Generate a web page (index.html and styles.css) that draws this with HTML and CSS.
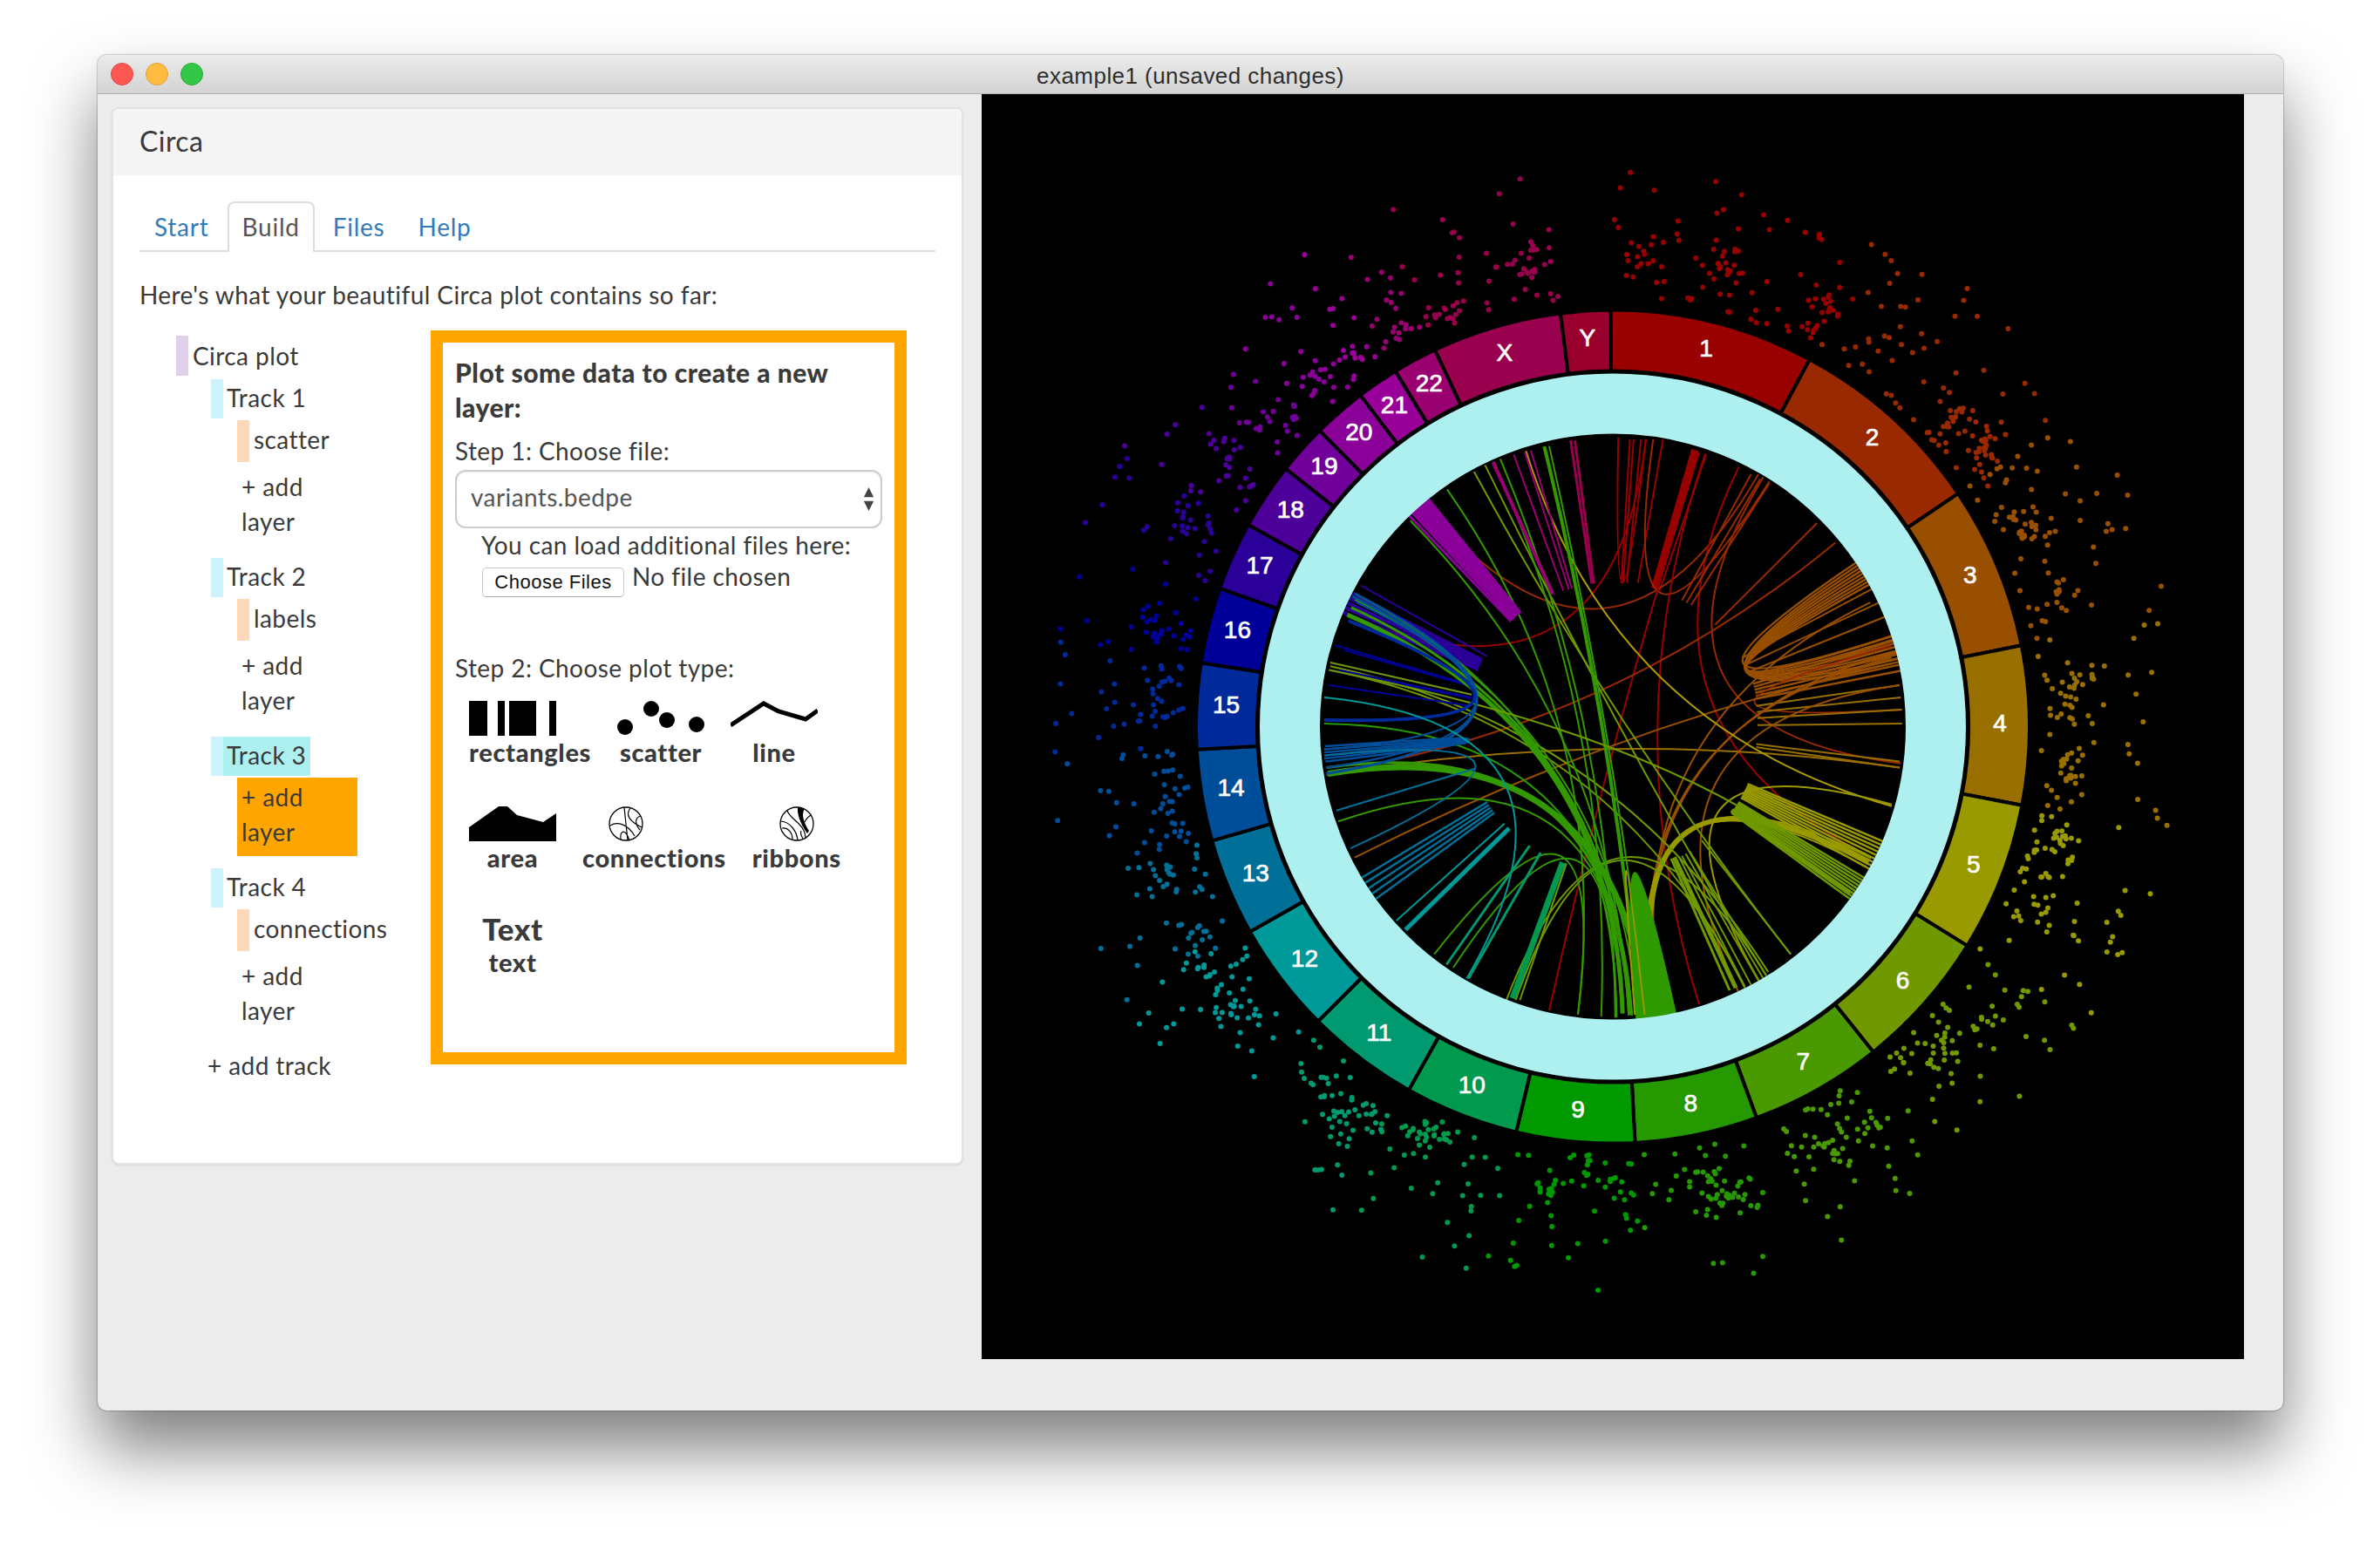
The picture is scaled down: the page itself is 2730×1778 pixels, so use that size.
FILE: index.html
```html
<!DOCTYPE html>
<html lang="en">
<head>
<meta charset="utf-8">
<title>example1 (unsaved changes)</title>
<link rel="stylesheet" href="styles.css">
</head>
<body>
<div class="window">
  <header class="titlebar">
    <div class="lights"><span class="light red"></span><span class="light yellow"></span><span class="light green"></span></div>
    <div class="window-title">example1 (unsaved changes)</div>
  </header>
  <main class="main">
    <section class="sidebar">
      <div class="panel">
        <div class="panel-heading">Circa</div>
        <div class="panel-body">
          <ul class="tabs">
            <li class="tab"><a>Start</a></li>
            <li class="tab active"><a>Build</a></li>
            <li class="tab"><a>Files</a></li>
            <li class="tab"><a>Help</a></li>
          </ul>
          <p class="intro">Here's what your beautiful Circa plot contains so far:</p>
          <div class="build">
            <div class="tree">
              <div class="plot-node">Circa plot</div>
              <div class="track"><div class="track-name">Track 1</div>
                <div class="layer">scatter</div>
                <div class="add-layer">+ add layer</div>
              </div>
              <div class="track"><div class="track-name">Track 2</div>
                <div class="layer">labels</div>
                <div class="add-layer">+ add layer</div>
              </div>
              <div class="track"><div class="track-name selected"><span>Track 3</span></div>
                <div class="add-layer current">+ add layer</div>
              </div>
              <div class="track"><div class="track-name">Track 4</div>
                <div class="layer">connections</div>
                <div class="add-layer">+ add layer</div>
              </div>
              <div class="add-track">+ add track</div>
            </div>
            <div class="new-layer">
              <div class="new-title">Plot some data to create a new layer:</div>
              <div class="step-one">Step 1: Choose file:</div>
              <div class="select-wrap">
                <select class="file-select"><option>variants.bedpe</option></select>
                <svg class="select-arrows" viewBox="0 0 10 24"><path d="M5 0l5 10H0zM5 24l5-10H0z"/></svg>
              </div>
              <div class="load-more">You can load additional files here:</div>
              <div class="file-row"><button class="file-button">Choose Files</button><span>No file chosen</span></div>
              <div class="step-two">Step 2: Choose plot type:</div>
              <div class="plot-row">
                <div class="plot-type">
                  <svg class="icon" viewBox="0 0 100 40"><rect width="21" height="40"/><rect x="33" width="8" height="40"/><rect x="46" width="31" height="40"/><rect x="92" width="8" height="40"/></svg>
                  <div class="plot-label">rectangles</div>
                </div>
                <div class="plot-type centered">
                  <svg class="icon" viewBox="0 0 100 40"><circle cx="9" cy="30" r="9"/><circle cx="39" cy="9" r="9"/><circle cx="57" cy="22" r="9"/><circle cx="91" cy="27" r="9"/></svg>
                  <div class="plot-label">scatter</div>
                </div>
                <div class="plot-type centered">
                  <svg class="icon" viewBox="0 0 100 40"><path class="icon-line" d="M0 28L38 3 55 12 86 21 100 11"/></svg>
                  <div class="plot-label">line</div>
                </div>
              </div>
              <div class="plot-row">
                <div class="plot-type centered">
                  <svg class="icon" viewBox="0 0 100 40"><path d="M0 24L34 0H44L55 10 85 18 100 8V40H0z"/></svg>
                  <div class="plot-label">area</div>
                </div>
                <div class="plot-type">
                  <svg class="icon round shifted" viewBox="0 0 40 40"><circle class="icon-ring" cx="20" cy="20" r="19"/><path class="icon-thin" d="M18 1L22 39M25 2C19 10 24 17 38 24M37 11C30 13 30 20 36 27M2 22C10 17 22 20 30 34M14 38C13 28 19 24 24 39"/></svg>
                  <div class="plot-label">connections</div>
                </div>
                <div class="plot-type centered">
                  <svg class="icon round" viewBox="0 0 40 40"><circle class="icon-ring" cx="20" cy="20" r="19"/><path d="M21 1L29 3C24 10 30 22 34 28L32 31C27 24 20 12 21 1z"/><path class="icon-thin" d="M9 5C13 16 30 20 30 37M36 10C30 14 28 18 27 23M2 17C12 18 20 28 21 39M3 25C10 24 15 30 15 38M27 37C24 32 24 30 25 28"/></svg>
                  <div class="plot-label">ribbons</div>
                </div>
              </div>
              <div class="plot-row last">
                <div class="plot-type centered text-type">
                  <div class="text-sample">Text</div>
                  <div class="plot-label">text</div>
                </div>
              </div>
            </div>
          </div>
        </div>
      </div>
    </section>
    <section class="chart">
      <svg id="circos" class="circos" viewBox="-724 -725.6 1448 1451"></svg>
    </section>
  </main>
</div>
<script src="chart.js"></script>
</body>
</html>
```

FILE: styles.css
```css
* { box-sizing: border-box; }
html, body { margin: 0; height: 100%; }
body {
  background: #fff;
  padding: 63px 111px 0 112px;
  font-family: "Lato", "Noto Sans", sans-serif;
  font-size: 28px;
  line-height: 40px;
  color: #3a3a3a;
  letter-spacing: .42px;
  overflow: hidden;
}
.window {
  height: 1555px;
  background: #ececec;
  border-radius: 10px;
  box-shadow: 0 44px 76px rgba(0,0,0,.5), 0 0 2px rgba(0,0,0,.6);
  overflow: hidden;
  position: relative;
}
.titlebar {
  height: 44px;
  display: flex;
  align-items: center;
  position: relative;
  background: linear-gradient(#ebebeb, #d3d3d3);
  border-bottom: 1px solid #b1b1b1;
  box-sizing: content-box;
}
.lights { display: flex; gap: 14px; padding-left: 15px; }
.light { width: 26px; height: 26px; border-radius: 50%; }
.red { background: #fc5753; border: 1px solid #df4744; }
.yellow { background: #fdbc40; border: 1px solid #de9f34; }
.green { background: #33c748; border: 1px solid #27aa35; }
.window-title {
  position: absolute;
  left: 0; right: 0; top: 0;
  text-align: center;
  font: 26px/48px "Liberation Sans", Arial, sans-serif;
  letter-spacing: .45px;
  color: #2e2e2e;
}
.main { display: flex; }
.sidebar { width: 1014px; padding: 15px 21px 0 16px; }
.panel {
  background: #fff;
  border: 2px solid #e2e2e2;
  border-radius: 8px;
  overflow: hidden;
  box-shadow: 0 1px 2px rgba(0,0,0,.08);
}
.panel-heading {
  height: 76px;
  padding: 0 30px;
  background: #f5f5f5;
  font-size: 32px;
  line-height: 74px;
}
.panel-body { padding: 30px 30px 92px; }
.tabs {
  list-style: none;
  margin: 0;
  padding: 0;
  display: flex;
  gap: 4px;
  height: 58px;
  border-bottom: 2px solid #ddd;
}
.tab a {
  display: block;
  height: 58px;
  padding: 7px 15px 0;
  border: 2px solid transparent;
  border-bottom: 0;
  color: #337ab7;
  letter-spacing: .75px;
  border-radius: 8px 8px 0 0;
}
.tab.active a { color: #555; background: #fff; border-color: #ddd; }
.intro { margin: 29px 0 21px; }
.build { display: flex; }
.tree { width: 334px; padding: 6px 0 0 42px; flex: none; }
.plot-node { height: 46px; padding: 3px 0 0 5px; border-left: 14px solid #e1d0ec; margin-bottom: 4px; }
.track { margin-left: 40px; }
.track-name { height: 45px; padding: 1px 0 0 4px; border-left: 14px solid #cdf3ff; width: 114px; margin-bottom: 2px; white-space: nowrap; }
.track-name.selected { padding: 0; }
.track-name.selected span { display: block; height: 45px; padding: 1px 0 0 4px; background: #aeefef; }
.layer { margin-left: 30px; height: 48px; padding: 2px 0 0 5px; border-left: 14px solid #fdd9b9; margin-bottom: 6px; white-space: nowrap; }
.add-layer { margin-left: 30px; width: 138px; padding: 2px 5px 8px; margin-bottom: 14px; }
.add-layer.current { background: #ffa500; }
.add-track { margin: 15px 0 0 36px; white-space: nowrap; }
.new-layer {
  width: 546px;
  height: 842px;
  border: 14px solid #ffa500;
  padding: 14px;
}
.new-title { font-weight: 900; font-size: 30px; letter-spacing: .5px; width: 460px; }
.step-one { margin-top: 10px; }
.select-wrap { position: relative; margin-top: 2px; }
.file-select {
  display: block;
  width: 100%;
  height: 67px;
  appearance: none;
  background: #fff;
  border: 2px solid #ccc;
  border-radius: 12px;
  padding: 0 16px 5px;
  font: inherit;
  letter-spacing: inherit;
  color: #555;
  box-shadow: inset 0 1px 2px rgba(0,0,0,.08);
}
.select-arrows { position: absolute; right: 9px; top: 20px; width: 13px; height: 27px; fill: #444; }
.load-more { margin: -1px 0 0 30px; white-space: nowrap; }
.file-row { display: flex; margin: -4px 0 0 31px; gap: 9px; height: 40px; }
.file-button {
  width: 163px;
  height: 34px;
  margin-top: 10px;
  padding: 0;
  background: #fff;
  border: 1px solid #c6c6c6;
  border-bottom-color: #aaa;
  border-radius: 5px;
  font: 22px "Liberation Sans", Arial, sans-serif;
  color: #111;
  letter-spacing: .5px;
}
.step-two { margin: 65px 0 17px; }
.plot-row { display: flex; gap: 30px; margin: 0 0 41px 16px; }
.plot-row.last { margin-bottom: 0; }
.plot-type { min-width: 100px; font-weight: 900; }
.plot-label { white-space: nowrap; font-size: 29px; letter-spacing: .65px; margin-top: -1px; }
.centered { text-align: center; }
.icon { display: block; width: 100px; height: 40px; margin-top: 1px; margin-bottom: -1px; }
.centered .icon { margin-left: auto; margin-right: auto; }
.round { width: 40px; }
.shifted { margin-left: 30px; }
.icon-line { fill: none; stroke: #000; stroke-width: 5; }
.icon-ring { fill: #fff; stroke: #000; stroke-width: 1.3; }
.icon-thin { fill: none; stroke: #000; stroke-width: 1.2; }
.text-type { width: 100px; }
.text-sample { font-size: 35px; letter-spacing: .5px; }
.chart { width: 1448px; height: 1451px; background: #000; }
.circos { display: block; width: 1448px; height: 1451px; }
.chrom { stroke: #000; stroke-width: 4; }
.chrom-label { fill: #fff; stroke: #fff; stroke-width: .7; font: 28px "Liberation Sans", Arial, sans-serif; letter-spacing: 0; text-anchor: middle; dominant-baseline: central; }
.ring { fill: none; stroke: #aeefef; stroke-width: 69; }
.link { fill: none; }
```

FILE: chart.js
```js
// Circos plot: chromosomes, scatter track, and links, from GRCh37 sizes.
var NS = "http://www.w3.org/2000/svg";
var svg = document.getElementById("circos");
function el(name, attrs, text) {
  var e = document.createElementNS(NS, name);
  for (var k in attrs) e.setAttribute(k, attrs[k]);
  if (text !== undefined) e.textContent = text;
  svg.appendChild(e);
  return e;
}
var CH = [
  ["1",249.25,"#990000"],["2",243.2,"#992900"],["3",198,"#994f00"],["4",191.2,"#997000"],
  ["5",180.9,"#999900"],["6",171.1,"#709900"],["7",159.1,"#4a9900"],["8",146.4,"#269900"],
  ["9",141.2,"#009900"],["10",135.5,"#00994d"],["11",135,"#009970"],["12",133.9,"#009999"],
  ["13",115.2,"#007099"],["14",107.3,"#004d99"],["15",102.5,"#002a99"],["16",90.4,"#000099"],
  ["17",81.2,"#2a0099"],["18",78.1,"#4d0099"],["19",59.1,"#700099"],["20",63,"#8a0099"],
  ["21",48.1,"#990099"],["22",51.3,"#990070"],["X",155.3,"#99004d"],["Y",59.4,"#99002e"]
];
// small per-boundary corrections, degrees
var D = [0,.5,1,1.25,1.35,1.55,1.85,1.85,1.75,1.7,1.55,1.55,1.6,1.4,1.15,1.1,1.05,.9,.7,.55,.45,.2,0,0,0];
var total = 0; CH.forEach(function (c) { total += c[1]; });
var ROT = -0.3;
function pol(r, deg) {
  var a = deg * Math.PI / 180;
  return [r * Math.sin(a), -r * Math.cos(a)];
}
function f(p) { return p[0].toFixed(1) + " " + p[1].toFixed(1); }

// scatter track
var seed = 12345;
function rnd() {
  seed |= 0; seed = seed + 0x6D2B79F5 | 0;
  var t = Math.imul(seed ^ seed >>> 15, 1 | seed);
  t = t + Math.imul(t ^ t >>> 7, 61 | t) ^ t;
  return ((t ^ t >>> 14) >>> 0) / 4294967296;
}
function gauss() { return (rnd() + rnd() + rnd() + rnd() - 2) / 0.577; }

var start = 0;
CH.forEach(function (c, idx) {
  var span = c[1] / total * 360;
  c.a0 = start + ROT - D[idx];
  c.a1 = start + span + ROT - D[idx + 1];
  var a0 = c.a0, sp = c.a1 - c.a0;
  if (c[0] !== "Y") {
    var clusters = [], n = Math.round(c[1] * 0.44), i;
    for (i = 0; i < Math.max(2, Math.round(sp / 5)); i++) {
      clusters.push([a0 + 1 + rnd() * (sp - 2), 498 + rnd() * 50]);
    }
    for (i = 0; i < n; i++) {
      var ang, rad;
      if (rnd() < 0.5) {
        var k = clusters[Math.floor(rnd() * clusters.length)];
        ang = k[0] + gauss() * 1.3;
        rad = k[1] + Math.abs(gauss()) * 18 - 8;
      } else {
        ang = a0 + rnd() * sp;
        rad = 492 + Math.pow(rnd(), 1.6) * 158;
      }
      var p = pol(rad, ang);
      el("circle", { cx: p[0].toFixed(1), cy: p[1].toFixed(1), r: 3, fill: c[2] });
    }
  }
  start += span;
});

// links, given in a 1.4255x reference frame around (784,973)
var S = 1.4255, CX = 784, CY = 973;
function pt(x, y) { return [(x - CX) / S, (y - CY) / S]; }
function L(col, w, x1, y1, x2, y2) {
  var a = pt(x1, y1), b = pt(x2, y2);
  el("path", { "class": "link", d: "M" + f(a) + "Q0 0 " + f(b), stroke: col, "stroke-width": w });
}
function Sp(col, w, x, y) {
  var a = pt(x, y);
  el("path", { "class": "link", d: "M" + f(a) + "L" + f([a[0] / 2, a[1] / 2]), stroke: col, "stroke-width": w });
}
var R0 = 336;
function B(col, w, n, a1, a2, b1, b2) { // bundle between two arcs, in degrees
  for (var i = 0; i < n; i++) {
    var t = n > 1 ? i / (n - 1) : 0;
    var p = pol(R0, a1 + (a2 - a1) * t), q = pol(R0, b1 + (b2 - b1) * ((t * 7) % 1));
    el("path", { "class": "link", d: "M" + f(p) + "Q0 0 " + f(q), stroke: col, "stroke-width": w });
  }
}
function Spikes(col, w, n, a1, a2) {
  for (var i = 0; i < n; i++) {
    var t = n > 1 ? i / (n - 1) : 0, p = pol(R0, a1 + (a2 - a1) * t);
    el("path", { "class": "link", d: "M" + f(p) + "L" + f([p[0] / 2, p[1] / 2]), stroke: col, "stroke-width": w });
  }
}
function Ribbon(col, a1, a2) { // a wide link that returns to the same region
  var p1 = pol(R0 + 2, a1), p2 = pol(R0 + 2, a2);
  el("path", { d: "M" + f(p1) + "A338 338 0 0 1 " + f(p2) + "Q0 0 " + f(p1) + "z", fill: col });
}

var RED = "#990000", RO = "#992900", BR = "#994f00", OC = "#997000", YE = "#999900", YG = "#709900", GR = "#339900";

// chr 1 and 2
L(RED, 2, 793, 500, 838, 503);
[812, 818, 830, 866].forEach(function (x) { Sp(RED, 2, x, 503); });
Sp(RED, 5, 916, 520); Sp(RED, 4, 922, 522); Sp(RED, 2, 937, 527);
L(RO, 2, 850, 503, 1040, 572);
L(RED, 2, 347, 790, 838, 503);
L(RO, 2, 478, 612, 1022, 560);
L(RED, 2, 925, 525, 680, 1437);
L(RED, 2, 990, 548, 1207, 1187);
L(RED, 2, 935, 527, 925, 1427);
L(RO, 2, 1030, 565, 1255, 1033);
L(RO, 2, 1148, 672, 318, 1048);
Sp(RO, 2, 1118, 640);
Sp(RO, 2, 1010, 560); Sp(RO, 2, 1025, 568); Sp(RO, 2, 1040, 575);
// chr 3 and 4
B(BR, 2.5, 9, 56, 61, 72, 78);
Spikes(BR, 2.5, 6, 73, 79);
Spikes(BR, 2, 3, 62, 68);
L(RO, 2, 1255, 945, 1240, 840);
[[1253, 905], [1255, 925], [1257, 945], [1257, 968]].forEach(function (p) { Sp(OC, 2, p[0], p[1]); });
Sp(OC, 2, 1253, 1040); Sp(OC, 2, 1253, 1030);
L(OC, 2, 316, 1052, 1253, 1040);
L(BR, 2, 362, 1187, 1240, 870);
L(BR, 2, 1240, 860, 850, 1440);
L(BR, 2, 1250, 850, 856, 1438);
L(BR, 2, 1205, 770, 862, 1436);
L(BR, 2, 1252, 905, 990, 1408);
// chr 5
L("#b09a00", 2, 642, 522, 1240, 1103);
L(YE, 2, 1240, 1100, 1025, 1392);
L(YE, 6, 1202, 1195, 852, 1440);
L(YE, 2, 1198, 1202, 846, 1440);
L(YE, 2, 1206, 1188, 858, 1440);
Spikes(YE, 2.5, 9, 113, 119);
Spikes(YG, 2.5, 9, 121, 126);
Sp(YG, 5, 1172, 1246);
// chr 6 and long green lines
[[985, 1400, 5], [975, 1404, 3], [1000, 1398, 2], [1010, 1395, 2], [1022, 1388, 2], [1035, 1380, 2], [1075, 1345, 2]].forEach(function (p) { Sp(YG, p[2], p[0], p[1]); });
L(YG, 2, 557, 556, 1075, 1345);
L(YG, 2, 575, 545, 1030, 1385);
L(YG, 2, 322, 874, 1038, 1374);
L(YG, 2, 320, 880, 1000, 1400);
L(YG, 2, 610, 1420, 1035, 1380);
L(YG, 2, 625, 1420, 1000, 1400);
L(GR, 2, 513, 585, 727, 1444);
L(GR, 2, 453, 636, 810, 1445);
L(GR, 2, 590, 540, 765, 1447);
L(GR, 2, 600, 535, 788, 1449);
L(GR, 4, 672, 515, 828, 1445);
L(GR, 2, 680, 514, 840, 1445);
L(GR, 2, 492, 1345, 727, 1444);
L(GR, 2, 523, 1367, 790, 1448);
L(GR, 2, 335, 1128, 810, 1445);
L("#269900", 2, 312, 968, 815, 1445);
// upper chrs
Spikes("#8a0099", 3, 7, 316, 321);
Ribbon("#8a0099", 317, 321);
[[588, 540, 4], [622, 528, 2], [640, 524, 2], [650, 521, 2]].forEach(function (p) { Sp("#990070", p[2], p[0], p[1]); });
Sp("#99004d", 3, 715, 505); Sp("#99004d", 3, 722, 505);
// chr 16-15
Sp("#2a0099", 2, 372, 742);
Spikes("#2a0099", 4, 5, 293, 297);
[[330, 840], [320, 880], [322, 868], [345, 848], [318, 905], [335, 880]].forEach(function (p) { Sp("#000099", 2, p[0], p[1]); });
L(GR, 5, 350, 790, 800, 1442);
L(GR, 3, 356, 778, 812, 1444);
L(GR, 2, 362, 765, 825, 1445);
L(GR, 2, 366, 758, 790, 1448);
L(GR, 7, 318, 1050, 840, 1445);
L(GR, 3, 316, 1040, 815, 1445);
Ribbon("#2f9900", 167.5, 175.5);
L(YG, 2, 320, 880, 1035, 1130);
Sp(YG, 2, 322, 868);
// blue loops
L("#004d99", 3, 358, 760, 315, 1050);
L("#004d99", 2.5, 362, 755, 315, 1040);
L("#004d99", 2, 365, 770, 312, 1010);
L("#002a99", 4, 312, 962, 352, 800);
L("#004d99", 2.5, 312, 1010, 312, 1025);
L("#004d99", 2.5, 312, 1015, 314, 1030);
L("#004d99", 2.5, 313, 1005, 314, 1020);
L("#009999", 2, 312, 925, 545, 1385);
L("#007099", 2, 312, 1020, 355, 1172);
Sp("#007099", 2, 332, 1110);
// teal spikes
Spikes("#007099", 2.5, 5, 234, 239);
Sp("#009999", 2, 430, 1290); Sp("#009999", 5, 445, 1305);
Sp("#009970", 3, 512, 1362); Sp("#009970", 3, 548, 1385);
Sp("#00994d", 7, 620, 1417);
Sp(YG, 2, 632, 1420);
L(YE, 2, 820, 1444, 836, 1444);

// chromosome band and ring
CH.forEach(function (c) {
  var a = pol(478, c.a0), b = pol(478, c.a1), d = pol(408, c.a1), e = pol(408, c.a0);
  el("path", {
    "class": "chrom", fill: c[2],
    d: "M" + f(a) + "A478 478 0 0 1 " + f(b) + "L" + f(d) + "A408 408 0 0 0 " + f(e) + "z"
  });
  var m = pol(444, (c.a0 + c.a1) / 2);
  el("text", { "class": "chrom-label", x: m[0].toFixed(1), y: (m[1] - 3).toFixed(1) }, c[0]);
});
el("circle", { "class": "ring", cx: 0, cy: 0, r: 370.5 });
```
